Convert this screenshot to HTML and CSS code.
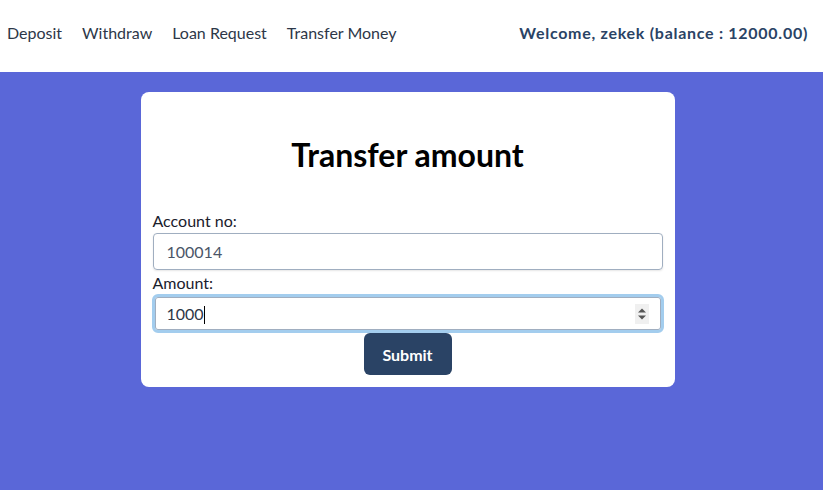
FILE: index.html
```html
<!DOCTYPE html>
<html>
<head>
<meta charset="utf-8">
<link rel="stylesheet" href="styles.css">
</head>
<body>
<nav class="nav">
  <ul class="links">
    <li><a href="#">Deposit</a></li>
    <li><a href="#">Withdraw</a></li>
    <li><a href="#">Loan Request</a></li>
    <li><a href="#">Transfer Money</a></li>
  </ul>
  <div class="welcome">Welcome, zekek (balance : 12000.00)</div>
</nav>
<main class="main">
  <form class="card">
    <h1 class="title">Transfer amount</h1>
    <label class="label">Account no:</label>
    <div class="input">100014</div>
    <label class="label">Amount:</label>
    <div class="input focus"><span>1000<span class="caret"></span></span>
      <svg class="spin" width="14" height="20" viewBox="0 0 14 20"><rect width="14" height="20" fill="#f0f0f0"/><path d="M3 8.5 L7 4.5 L11 8.5 Z" fill="#555"/><path d="M3 11.5 L7 15.5 L11 11.5 Z" fill="#555"/></svg>
    </div>
    <div class="actions"><button type="button" class="btn">Submit</button></div>
  </form>
</main>
</body>
</html>
```
FILE: styles.css
```css
html, body { margin: 0; padding: 0; height: 100%; }
body { background: #5a67d8; font-family: "Lato", "Open Sans", sans-serif; }
.nav { background: #fff; height: 72px; display: flex; align-items: center; justify-content: space-between; padding: 0 15px 7px 7px; box-sizing: border-box; }
.links { list-style: none; margin: 0; padding: 0; display: flex; gap: 20px; }
.links a { color: #2d3748; text-decoration: none; font-size: 16px; }
.welcome { color: #2a4365; font-weight: 700; font-size: 16px; letter-spacing: 0.72px; }
.main { display: flex; justify-content: center; padding-top: 20px; }
.card { background: #fff; width: 534px; border-radius: 8px; padding: 12px; box-sizing: border-box; display: flex; flex-direction: column; margin-left: -8px; }
.title { text-align: center; font-size: 32px; font-weight: 700; color: #000; margin: 31px 0 33px; line-height: 40px; }
.label { font-size: 16px; color: #1a202c; line-height: 25px; }
.input { height: 37px; border: 1px solid #a0aec0; border-radius: 4px; box-sizing: border-box; padding: 0 13px; display: flex; align-items: center; justify-content: space-between; color: #4a5568; font-size: 16px; box-shadow: 0 1px 2px rgba(0,0,0,0.1); }
.input.focus { height: 39px; margin-top: -1px; border: 3px solid #a3cdee; box-shadow: inset 0 0 0 1px #a0aec0; border-radius: 6px; margin-left: -1px; margin-right: -1px; padding-left: 12px; padding-right: 12px; color: #2d3748; }
.caret { display: inline-block; width: 1px; height: 18px; background: #000; vertical-align: -4px; }
.actions { display: flex; justify-content: center; }
.btn { background: #2a4365; color: #fff; font-family: inherit; font-weight: 700; font-size: 16px; border: 0; border-radius: 6px; width: 88px; height: 42px; }
```
